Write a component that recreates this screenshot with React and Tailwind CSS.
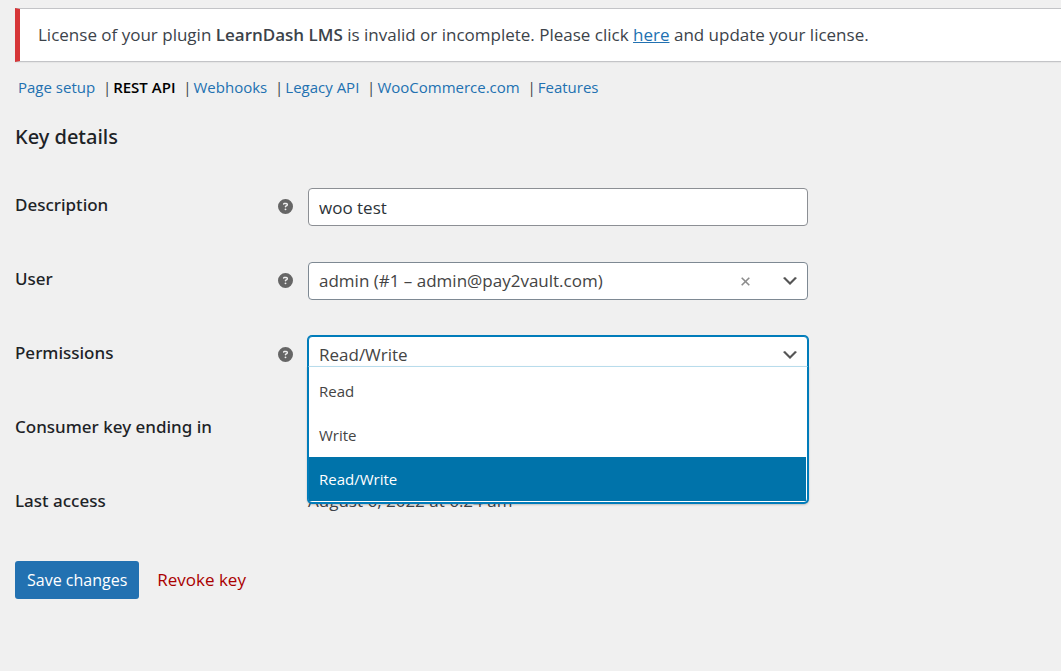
import React, { useState } from 'react';
import { FaCircleQuestion } from 'react-icons/fa6';

const SECTIONS = ['Page setup', 'REST API', 'Webhooks', 'Legacy API', 'WooCommerce.com', 'Features'];
const PERMISSIONS = ['Read', 'Write', 'Read/Write'];

const labelClass = "font-['Noto_Sans','Open_Sans',sans-serif] font-medium leading-[34px] text-[#1d2327]";

function Chevron() {
    return (
        <svg className="pointer-events-none absolute right-2 top-1/2 size-5 -translate-y-1/2" viewBox="0 0 20 20" aria-hidden="true">
            <path d="M5 6l5 5 5-5 2 1-7 7-7-7 2-1z" fill="#555" />
        </svg>
    );
}

function Row({ label, htmlFor, help, children }) {
    return (
        <div className="flex h-[38px]">
            <div className="flex w-[293px] shrink-0 justify-between pr-[15px]">
                {htmlFor ? (
                    <label htmlFor={htmlFor} className={labelClass}>{label}</label>
                ) : (
                    <span className={labelClass}>{label}</span>
                )}
                {help && <FaCircleQuestion className="mt-[11px] size-[15px] text-[#666]" />}
            </div>
            <div className="relative w-full max-w-[500px]">{children}</div>
        </div>
    );
}

export default function App() {
    const [description, setDescription] = useState('woo test');
    const [user, setUser] = useState('1');
    const [permission, setPermission] = useState('Read/Write');
    const [open, setOpen] = useState(true);

    return (
        <div className="min-h-screen bg-[#f0f0f0] pl-[15px] pt-2 font-['Open_Sans','Noto_Sans',sans-serif] text-[17px] text-[#3c434a]">
            {/* License notice */}
            <div className="border-y border-l-[5px] border-y-[#c3c4c7] border-l-[#d63638] bg-white px-[18px] py-3 leading-7 shadow-[0_1px_1px_#0000000a]">
                License of your plugin <strong className="font-semibold">LearnDash LMS</strong> is invalid or incomplete. Please click{' '}
                <a href="#license" className="text-[#2271b1] underline">here</a> and update your license.
            </div>

            {/* Sections */}
            <ul className="mt-[13px] flex gap-0.5 pl-[3px] text-[15px] leading-6">
                {SECTIONS.map((name, i) => (
                    <li key={name} className="whitespace-pre">
                        <a href="#section" className={name === 'REST API' ? 'font-semibold text-black' : 'text-[#2271b1]'}>{name}</a>
                        {i < SECTIONS.length - 1 && <span>{'  |'}</span>}
                    </li>
                ))}
            </ul>

            <h2 className="mt-6 font-['Noto_Sans','Open_Sans',sans-serif] text-xl font-medium leading-7 text-[#1d2327]">Key details</h2>

            <form className="mt-[37px]" onSubmit={(e) => e.preventDefault()}>
                <div className="flex flex-col gap-9">
                    <Row label="Description" htmlFor="description" help>
                        <input
                            id="description"
                            type="text"
                            value={description}
                            onChange={(e) => setDescription(e.target.value)}
                            className="h-[38px] w-full rounded border border-[#8c8f94] bg-white px-2.5 text-[#2c3338] outline-none"
                        />
                    </Row>

                    <Row label="User" htmlFor="user" help>
                        <select
                            id="user"
                            value={user}
                            onChange={(e) => setUser(e.target.value)}
                            className="h-[38px] w-full appearance-none rounded border border-[#7e8993] bg-white px-2.5 text-[#444] outline-none"
                        >
                            <option value=""></option>
                            <option value="1">admin (#1 – admin@pay2vault.com)</option>
                        </select>
                        <button
                            type="button"
                            aria-label="Clear user"
                            onClick={() => setUser('')}
                            className="absolute right-[55px] top-0 flex h-[38px] w-4 items-center justify-center"
                        >
                            <svg className="size-[9px]" viewBox="0 0 9 9" fill="none" stroke="#8c8c8c" strokeWidth="1.6">
                                <path d="M.7.7l7.6 7.6M8.3.7L.7 8.3" />
                            </svg>
                        </button>
                        <Chevron />
                    </Row>

                    <Row label="Permissions" htmlFor="permissions" help>
                        <select
                            id="permissions"
                            value={permission}
                            onChange={(e) => setPermission(e.target.value)}
                            onMouseDown={(e) => {
                                e.preventDefault();
                                setOpen(!open);
                            }}
                            className="h-[38px] w-full appearance-none rounded border border-[#007cba] bg-white px-2.5 text-[#444] shadow-[0_0_0_1px_#007cba] outline-none"
                        >
                            {PERMISSIONS.map((p) => <option key={p}>{p}</option>)}
                        </select>
                        <Chevron />
                        {open && (
                            <ul role="listbox" aria-label="Permissions" className="absolute inset-x-0 top-[30px] z-10 rounded-b border border-b-0 border-[#007cba] border-t-[#b8dcec] bg-white pb-px pr-px pt-0.5 text-[15px] shadow-[0_1px_0_1px_#007cba,0_2px_2px_1px_#00000033]">
                                {PERMISSIONS.map((p) => (
                                    <li
                                        key={p}
                                        role="option"
                                        aria-selected={p === permission}
                                        onClick={() => {
                                            setPermission(p);
                                            setOpen(false);
                                        }}
                                        className={`h-11 px-2.5 leading-[45px] ${p === permission ? 'bg-[#0073aa] text-white' : 'text-[#444]'}`}
                                    >
                                        {p}
                                    </li>
                                ))}
                            </ul>
                        )}
                    </Row>

                    <Row label="Consumer key ending in" />

                    <Row label="Last access">
                        <span className="leading-[34px]">August 6, 2022 at 6:24 am</span>
                    </Row>
                </div>

                <div className="mt-[39px] flex items-center gap-[18px]">
                    <button type="submit" className="h-[38px] rounded-[3px] bg-[#2271b1] px-3 text-base text-white">Save changes</button>
                    <a href="#revoke" className="text-[#a00]">Revoke key</a>
                </div>
            </form>
        </div>
    );
}
